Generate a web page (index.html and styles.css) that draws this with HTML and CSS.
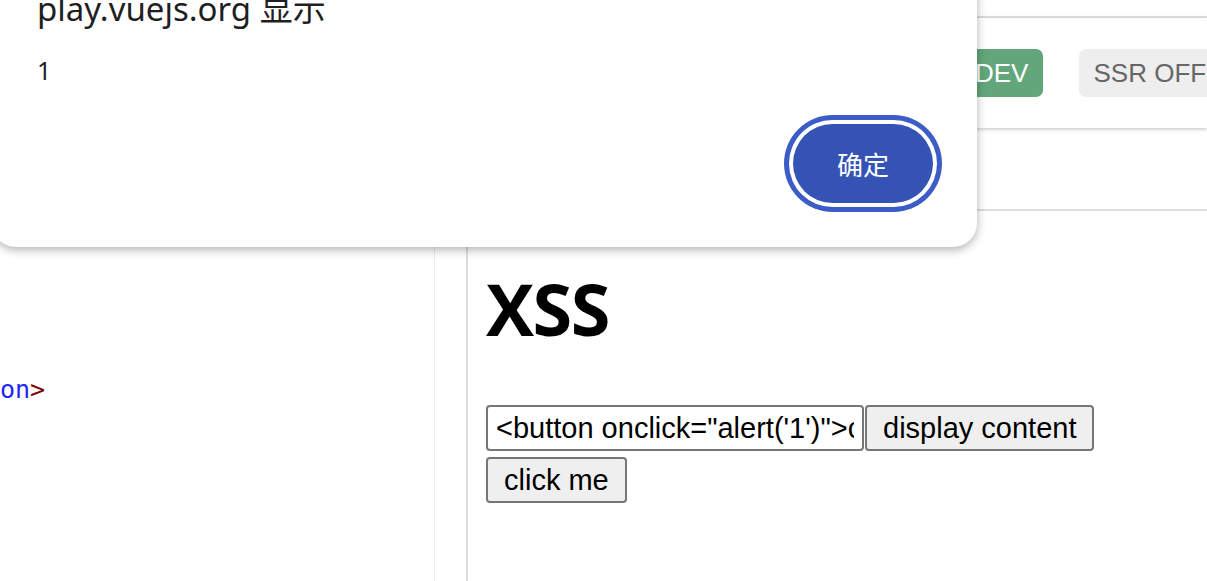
FILE: index.html
```html
<!DOCTYPE html>
<html lang="zh-CN">
<head>
<meta charset="utf-8">
<title>Vue SFC Playground</title>
<link rel="stylesheet" href="styles.css">
</head>
<body>
<div class="app">
  <div class="topbar"></div>
  <header class="toolbar">
    <div class="brand">Vue SFC Playground</div>
    <span class="badge badge-dev">DEV</span>
    <span class="badge badge-ssr">SSR OFF</span>
  </header>
  <main class="split">
    <section class="editor">
      <div class="editor-tabs"></div>
      <div class="editor-body">
        <div class="code"><span class="tok-tag">on</span><span class="tok-punct">&gt;</span></div>
        <div class="scroll-strip"></div>
      </div>
    </section>
    <section class="output">
      <div class="output-tabs"></div>
      <div class="preview">
        <h1 class="preview-title">XSS</h1>
        <div class="form-row">
          <input class="field" type="text" value="&lt;button onclick=&quot;alert('1')&quot;&gt;click me&lt;/button&gt;">
          <button class="native-btn">display content</button>
        </div>
        <div class="form-row">
          <button class="native-btn">click me</button>
        </div>
      </div>
    </section>
  </main>
</div>
<div class="dialog" role="alertdialog">
  <div class="dialog-title">play.vuejs.org 显示</div>
  <div class="dialog-msg">1</div>
  <div class="dialog-actions">
    <button class="dialog-ok">确定</button>
  </div>
</div>
</body>
</html>
```
FILE: styles.css
```css
* { box-sizing: border-box; }
html, body { margin: 0; height: 100%; }
body {
  font-family: "Liberation Sans", Arial, sans-serif;
  background: #fff;
  overflow: hidden;
  position: relative;
}
.app { display: flex; flex-direction: column; height: 100vh; }
.topbar { height: 18px; flex: none; border-bottom: 2px solid #e2e2e2; }
.toolbar {
  height: 110px;
  flex: none;
  display: flex;
  align-items: center;
  box-shadow: 0 1px 4px rgba(0,0,0,.25);
  position: relative;
  z-index: 1;
  overflow: hidden;
  background: #fff;
}
.brand { flex: 0 0 960px; font-size: 26px; padding-left: 30px; color: #333; }
.badge {
  flex: none;
  height: 48px;
  display: flex;
  align-items: center;
  padding: 0 15px;
  border-radius: 7px;
  font-size: 26px;
}
.badge-dev { background: #63a67b; color: #fff; }
.badge-ssr { background: #eeeeee; color: #666; margin-left: 36px; padding-left: 14px; }

.split { flex: 1; display: flex; min-height: 0; }
.editor { flex: 0 0 466px; display: flex; flex-direction: column; }
.editor-tabs { height: 83px; flex: none; }
.editor-body { flex: 1; display: flex; }
.code {
  flex: 1;
  padding-top: 157px;
  font-family: "DejaVu Sans Mono", monospace;
  font-size: 25px;
  line-height: 44px;
  white-space: pre;
  overflow: hidden;
}
.tok-tag { color: #2222ff; }
.tok-punct { color: #800000; }
.scroll-strip { flex: 0 0 32px; border-left: 1px solid #ececec; }

.output { flex: 1; display: flex; flex-direction: column; border-left: 2px solid #dedede; }
.output-tabs { height: 83px; flex: none; border-bottom: 2px solid #dddddd; }
.preview { padding: 0 18px; }
.preview-title {
  font-family: "Open Sans", sans-serif;
  font-weight: 700;
  font-size: 72px;
  letter-spacing: -1.5px;
  margin: 48px 0;
  line-height: normal;
}
.form-row { display: flex; gap: 1px; margin-bottom: 6px; }
.field {
  width: 378px;
  height: 46px;
  border: 2px solid #767676;
  border-radius: 4px;
  padding: 0 8px;
  font-family: "Liberation Sans", Arial, sans-serif;
  font-size: 29px;
  color: #000;
  background: #fff;
}
.native-btn {
  height: 46px;
  border: 2px solid #767676;
  border-radius: 4px;
  background: #efefef;
  padding: 0 16px;
  font-family: "Liberation Sans", Arial, sans-serif;
  font-size: 29px;
  color: #000;
}

.dialog {
  position: absolute;
  left: -8px;
  top: -40px;
  width: 985px;
  height: 287px;
  background: #fff;
  border-radius: 24px;
  box-shadow: 0 3px 10px rgba(0,0,0,.3);
  display: flex;
  flex-direction: column;
  padding: 27px 44px 44px 45px;
  font-family: "Noto Sans", "Noto Sans CJK SC", sans-serif;
  color: #1f1f1f;
  z-index: 10;
}
.dialog-title { font-size: 33px; line-height: 44px; }
.dialog-msg { font-size: 25px; line-height: 34px; margin-top: 22px; }
.dialog-actions { margin-top: auto; display: flex; justify-content: flex-end; }
.dialog-ok {
  width: 140px;
  height: 79px;
  border: 0;
  border-radius: 40px;
  background: #3453b4;
  color: #fff;
  font-family: "Noto Sans CJK SC", sans-serif;
  font-size: 26px;
  box-shadow: 0 0 0 4px #fff, 0 0 0 9px #3c5cc8;
}
```
